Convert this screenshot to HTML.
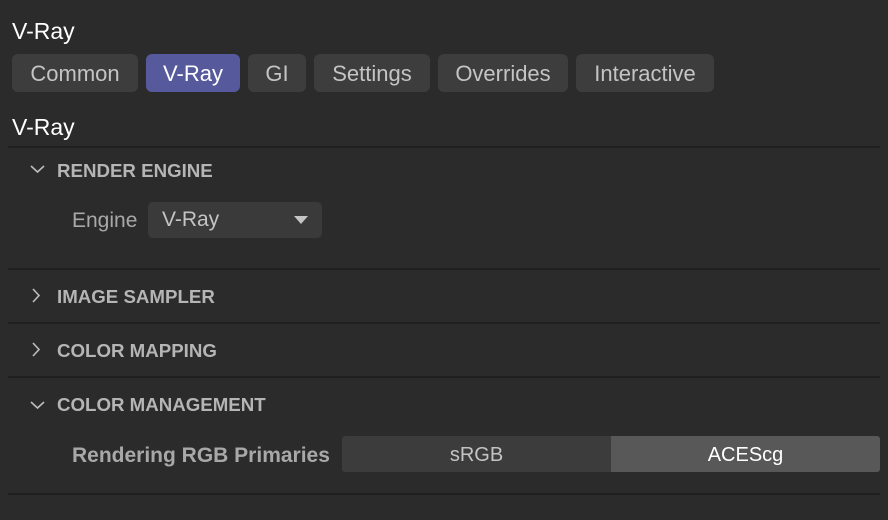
<!DOCTYPE html>
<html><head><meta charset="utf-8"><style>
*{margin:0;padding:0;box-sizing:border-box}
body{width:888px;height:520px;background:#2b2b2b;font-family:"Liberation Sans",sans-serif;position:relative;overflow:hidden;color:#c8c8c8}
.a{position:absolute}
.title{color:#fff;font-size:23px;left:12px;line-height:24px}
.tab{position:absolute;top:54px;height:38px;background:#3d3d3d;border-radius:6px;font-size:22px;line-height:40px;text-align:center;color:#c4c4c4}
.tab.on{background:#565a9c;color:#fff}
.line{position:absolute;left:8px;width:872px;height:2px;background:#1f1f1f}
.hd{position:absolute;left:57px;font-weight:bold;font-size:18.7px;color:#b5b5b5;line-height:20px}
.chev{position:absolute;left:30px}
</style></head><body>
<div class="a title" style="top:19px">V-Ray</div>
<div class="tab" style="left:12px;width:126px">Common</div>
<div class="tab on" style="left:146px;width:94px">V-Ray</div>
<div class="tab" style="left:248px;width:58px">GI</div>
<div class="tab" style="left:314px;width:116px">Settings</div>
<div class="tab" style="left:438px;width:130px">Overrides</div>
<div class="tab" style="left:576px;width:138px">Interactive</div>
<div class="a title" style="top:115px">V-Ray</div>

<div class="line" style="top:146px"></div>
<svg class="chev" style="top:163px" width="16" height="12"><path d="M1 3 L7.5 9 L14 3" fill="none" stroke="#bdbdbd" stroke-width="1.6"/></svg>
<div class="hd" style="top:161px">RENDER ENGINE</div>
<div class="a" style="left:72px;top:209px;font-size:21px;color:#a8a8a8;line-height:24px">Engine</div>
<div class="a" style="left:148px;top:202px;width:174px;height:36px;background:#3a3a3a;border-radius:5px"></div>
<div class="a" style="left:162px;top:208px;font-size:21px;color:#c4c4c4;line-height:24px">V-Ray</div>
<svg class="a" style="left:293px;top:215px" width="16" height="10"><path d="M1 1 L15 1 L8 9 Z" fill="#c4c4c4"/></svg>

<div class="line" style="top:268px"></div>
<svg class="chev" style="top:288px;left:31px" width="10" height="16"><path d="M2 1 L8 7.5 L2 14" fill="none" stroke="#bdbdbd" stroke-width="1.6"/></svg>
<div class="hd" style="top:287px">IMAGE SAMPLER</div>

<div class="line" style="top:322px"></div>
<svg class="chev" style="top:342px;left:31px" width="10" height="16"><path d="M2 1 L8 7.5 L2 14" fill="none" stroke="#bdbdbd" stroke-width="1.6"/></svg>
<div class="hd" style="top:341px">COLOR MAPPING</div>

<div class="line" style="top:376px"></div>
<svg class="chev" style="top:399px" width="16" height="12"><path d="M1 3 L7.5 9 L14 3" fill="none" stroke="#bdbdbd" stroke-width="1.6"/></svg>
<div class="hd" style="top:395px">COLOR MANAGEMENT</div>

<div class="a" style="left:72px;top:444px;font-weight:bold;font-size:21px;color:#a8a8a8;line-height:24px">Rendering RGB Primaries</div>
<div class="a" style="left:342px;top:436px;width:269px;height:36px;background:#3c3c3c;border-radius:3px 0 0 3px;font-size:20px;line-height:38px;text-align:center;color:#c4c4c4">sRGB</div>
<div class="a" style="left:611px;top:436px;width:269px;height:36px;background:#585858;border-radius:0 3px 3px 0;font-size:20px;line-height:38px;text-align:center;color:#fff">ACEScg</div>

<div class="line" style="top:493px"></div>
</body></html>
